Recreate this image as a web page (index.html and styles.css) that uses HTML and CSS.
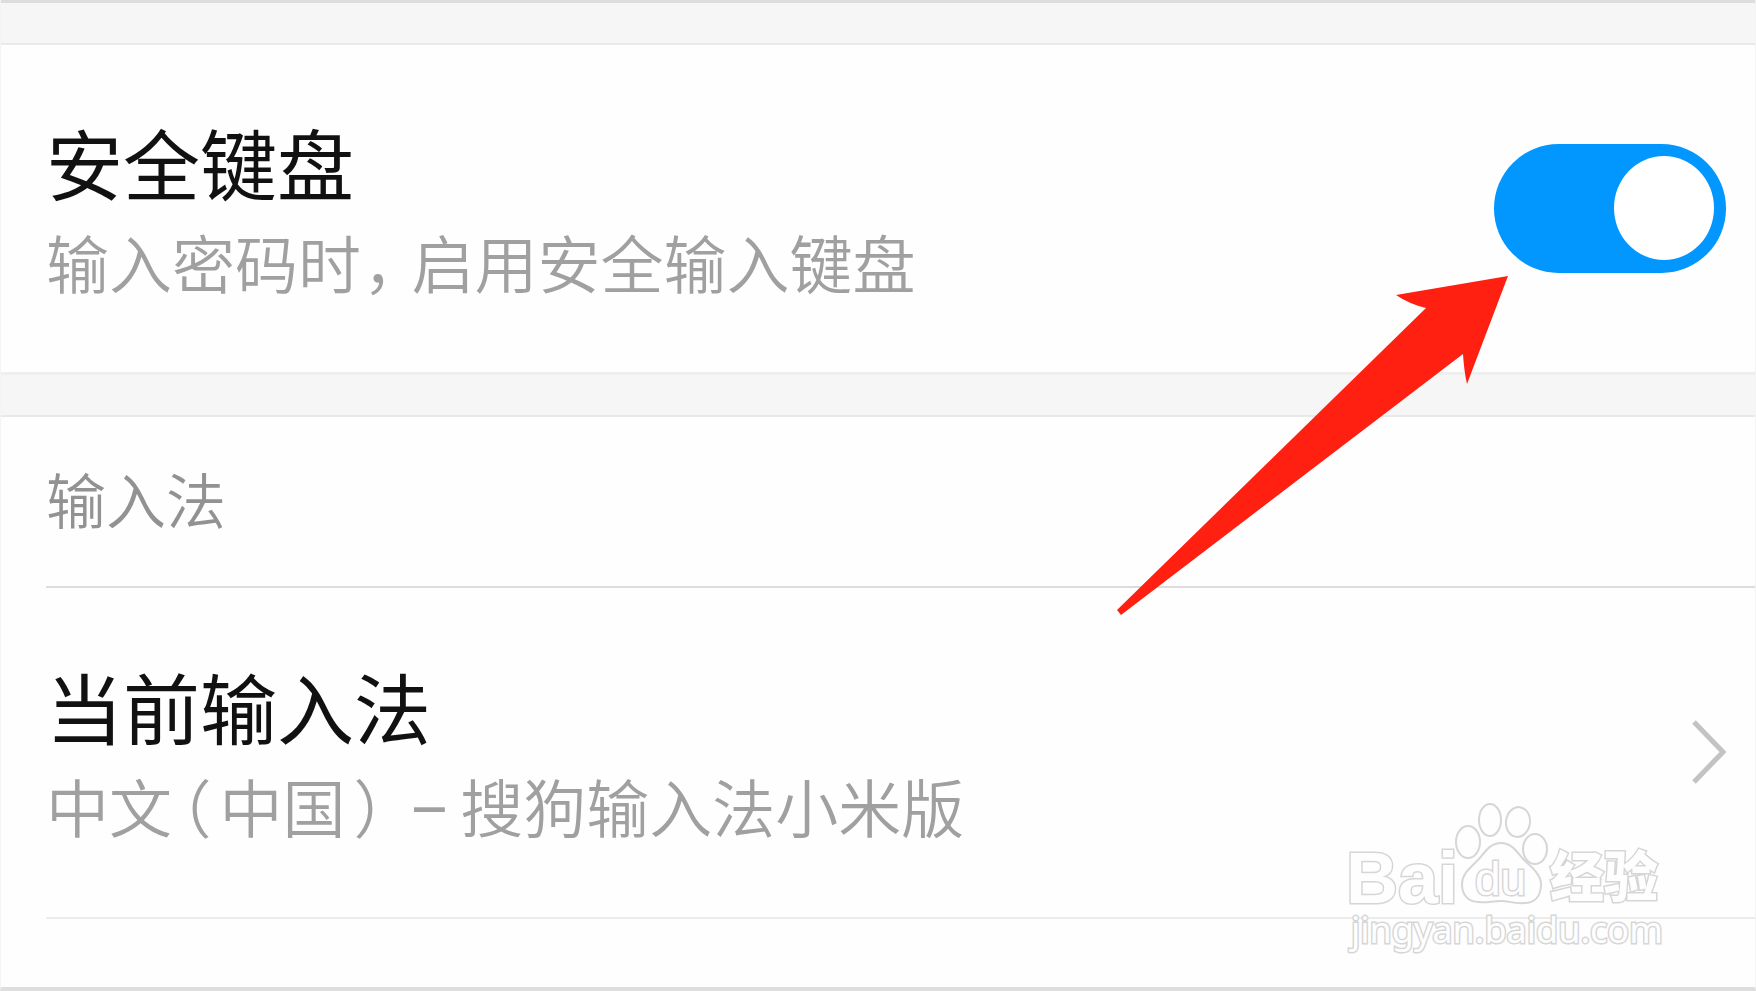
FILE: index.html
```html
<!DOCTYPE html>
<html lang="zh-CN">
<head>
<meta charset="utf-8">
<title>输入法设置</title>
<link rel="stylesheet" href="styles.css">
</head>
<body>
<main class="settings">
  <div class="band band-first"></div>

  <label class="row" for="secure-keyboard">
    <span class="row-text">
      <span class="row-title">安全键盘</span>
      <span class="row-note">输入密码时<span class="comma">，</span>启用安全输入键盘</span>
    </span>
    <input class="switch" id="secure-keyboard" type="checkbox" role="switch" checked>
  </label>

  <div class="band"></div>

  <section>
    <h2 class="section-title">输入法</h2>
    <a class="row row-link" href="#current">
      <span class="row-text">
        <span class="row-title">当前输入法</span>
        <span class="row-note">中文<span class="paren-open">（</span>中国<span class="paren-close">）</span><span class="dash">–</span>搜狗输入法小米版</span>
      </span>
      <svg class="chevron" viewBox="0 0 36 68" aria-hidden="true"><path d="M3 4 32 34 3 64"/></svg>
    </a>
  </section>

  <svg class="arrow" viewBox="0 0 394 343" aria-hidden="true">
    <path d="M392 3 280 22Q293 31 310 35L1 337 5 342 347 81Q348 98 351 111Z"/>
  </svg>

  <svg class="watermark" viewBox="0 0 340 160" role="img" aria-label="Baidu经验 jingyan.baidu.com">
    <g class="outline">
      <text class="mark-latin" x="16" y="103">Bai</text>
      <ellipse cx="138" cy="42" rx="12" ry="16"/>
      <ellipse cx="160" cy="20" rx="11" ry="16"/>
      <ellipse cx="188" cy="22" rx="12" ry="15" transform="rotate(8 188 22)"/>
      <ellipse cx="205" cy="49" rx="12" ry="15"/>
      <path d="M171 43C183 43 188 54 195 61C202 67 211 75 211 84C211 96 205 103 194 103C184 104 180 101 171 101C162 101 158 103 149 102C138 102 132 95 132 84C132 74 140 68 147 61C154 54 159 43 171 43Z"/>
      <text class="mark-du" x="145" y="95">du</text>
      <text class="mark-cjk" x="220" y="97">经验</text>
      <text class="mark-url" x="21" y="143">jingyan.baidu.com</text>
    </g>
  </svg>
</main>
</body>
</html>
```
FILE: styles.css
```css
* {
  box-sizing: border-box;
}

body {
  margin: 0;
  background: #fefefe;
  color: #111;
  font-family: "Noto Sans CJK SC", sans-serif;
}

.settings {
  position: relative;
  min-height: 100vh;
  overflow: hidden;
  border-left: 1px solid #f4f4f4;
  border-right: 1px solid #f4f4f4;
  border-bottom: 4px solid #dddedd;
}

.band {
  height: 45px;
  background: #f6f6f6;
  border-top: 3px solid #efefef;
  border-bottom: 2px solid #e9e9e9;
}

.band-first {
  border-top-color: #dcdedd;
}

.row {
  display: flex;
  align-items: center;
  justify-content: space-between;
  padding: 61px 29px 62px 45px;
  color: inherit;
  text-decoration: none;
}

.row-text {
  display: flex;
  flex-direction: column;
  padding-bottom: 6px;
}

.row-title {
  font-size: 77px;
  line-height: 112px;
}

.row-note {
  color: #a0a0a0;
  font-size: 63px;
  font-weight: 350;
  line-height: 86px;
}

.comma,
.paren-open,
.paren-close {
  font-feature-settings: "halt";
}

.comma {
  margin: 0 17px 0 2px;
}

.paren-open {
  margin: 0 8px;
}

.paren-close {
  margin: 0 24px 0 8px;
}

.dash {
  margin-right: 10px;
  font-family: Roboto, sans-serif;
  font-weight: 400;
  line-height: 1;
}

.switch {
  appearance: none;
  flex: none;
  display: flex;
  align-items: center;
  justify-content: flex-end;
  width: 232px;
  height: 129px;
  margin: 0;
  padding-right: 12px;
  border-radius: 65px;
  background: #ccc;
}

.switch:checked {
  background: #0297ff;
}

.switch::before {
  content: "";
  width: 100px;
  height: 104px;
  border-radius: 50%;
  background: #fff;
}

.section-title {
  margin: 0 0 0 45px;
  padding: 36px 0 43px 0;
  border-bottom: 2px solid #dcdcdc;
  color: #929292;
  font-size: 60px;
  font-weight: 350;
  line-height: 90px;
}

.row-link {
  margin-left: 45px;
  padding: 62px 28px 63px 0;
  border-bottom: 2px solid #ececec;
}

.chevron {
  flex: none;
  width: 36px;
  height: 68px;
  fill: none;
  stroke: #c3c3c3;
  stroke-width: 5;
}

.arrow {
  position: absolute;
  top: 273px;
  right: 245px;
  width: 394px;
  fill: #ff2012;
  pointer-events: none;
}

.watermark {
  position: absolute;
  right: 85px;
  bottom: 27px;
  width: 340px;
  pointer-events: none;
}

.outline {
  fill: #fefefe;
  stroke: #d6d6d6;
  stroke-width: 2;
}

.outline text {
  paint-order: stroke;
  stroke-width: 3;
}

.mark-latin {
  font: bold 72px "Liberation Sans", sans-serif;
}

.mark-du {
  font: 46px "Liberation Sans", sans-serif;
}

.mark-cjk {
  font: 900 54px "Noto Sans CJK SC", sans-serif;
}

.mark-url {
  font: 36px "Noto Sans", sans-serif;
}
```
